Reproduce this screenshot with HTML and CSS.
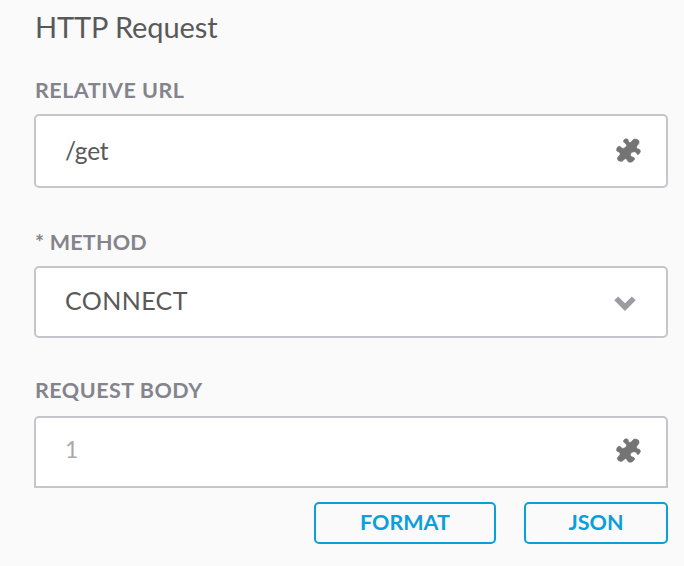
FILE: index.html
```
<!DOCTYPE html>
<html lang="en">
<head>
<meta charset="utf-8">
<title>HTTP Request</title>
<link rel="stylesheet" href="styles.css">
</head>
<body>
<svg class="defs" aria-hidden="true">
  <symbol id="puzzle" viewBox="-1 -1 75 75"><path d="M22 6Q26-1 33 2Q37 5 36 9Q37 13 42 12Q47 11 49 6Q53 0 61 3Q69 5 68 12Q68 17 64 20Q59 24 61 29Q63 32 67 32Q73 34 72 40L68 47Q66 49 63 48Q61 40 54 40Q45 40 42 47Q41 52 46 55Q56 57 55 63Q49 72 41 72Q35 71 34 68Q32 60 27 61Q23 62 22 65Q18 70 12 69Q4 68 3 61Q3 56 8 53Q13 49 11 44Q9 40 5 40Q-1 38 1 32Q3 25 8 24Q11 23 13 26Q16 31 22 30Q30 29 31 21Q30 16 25 14Q20 11 22 6Z"/></symbol>
</svg>
<main class="panel">
  <h1 class="title"><span>HTTP Request</span></h1>
  <section class="field">
    <div class="label url-label"><span>RELATIVE URL</span></div>
    <div class="control url"><span class="value">/get</span><svg class="puzzle"><use href="#puzzle"/></svg></div>
  </section>
  <section class="field">
    <div class="label method"><span>* METHOD</span></div>
    <div class="control select"><span class="value">CONNECT</span><svg class="chevron" viewBox="0 0 22 16"><path d="M2.2 2.4 11 11.2 19.8 2.4"/></svg></div>
  </section>
  <section class="field">
    <div class="label body-label"><span>REQUEST BODY</span></div>
    <div class="control editor"><span class="line">1</span><svg class="puzzle"><use href="#puzzle"/></svg></div>
  </section>
  <div class="actions">
    <button class="button format">FORMAT</button>
    <button class="button json">JSON</button>
  </div>
</main>
</body>
</html>
```
FILE: styles.css
```
* { box-sizing: border-box; }
body {
  margin: 0;
  background: #fafafa;
  color: #59595a;
  font-family: Lato, sans-serif;
}
.defs { display: none; }
.panel { padding: 9px 16px 0 34px; }
.title {
  margin: 0 0 33px;
  padding-left: 1px;
  font-size: 29px;
  font-weight: 400;
  line-height: 36px;
  letter-spacing: -0.1px;
}
.label {
  height: 24px;
  padding-left: 1px;
  color: #84848c;
  font-size: 21.5px;
  font-weight: 700;
  line-height: 24px;
  letter-spacing: 0.5px;
}
.url-label { margin-bottom: 12px; }
.method { margin-bottom: 12px; letter-spacing: 0.2px; }
.body-label { margin-bottom: 14px; }
.control {
  display: flex;
  align-items: center;
  justify-content: space-between;
  border: 2px solid #c5c5cb;
  border-radius: 5px;
  background: #fff;
  padding: 0 25px 0 29px;
  font-size: 25px;
  line-height: 30px;
}
.url { height: 74px; margin-bottom: 42px; padding-bottom: 2px; font-size: 24.5px; }
.url .value { padding-top: 2px; letter-spacing: -0.2px; }
.select { height: 72px; margin-bottom: 40px; padding-right: 30px; letter-spacing: 0.4px; }
.editor { height: 72px; padding-bottom: 4px; border-radius: 5px 5px 0 0; }
.select .value { position: relative; top: -2px; }
.line { padding-bottom: 2px; color: #a9a9a9; font-size: 23px; }
.puzzle { width: 25px; height: 25px; fill: #747474; stroke: #747474; stroke-width: 2; }
.chevron { width: 22px; height: 16px; margin-top: 4px; fill: none; stroke: #9c9ca2; stroke-width: 5.5; }
.actions {
  display: flex;
  justify-content: flex-end;
  gap: 28px;
  margin-top: 14px;
}
.button {
  height: 42px;
  padding: 0 0 2px;
  border: 2px solid #0a9fdb;
  border-radius: 5px;
  background: transparent;
  color: #0a9fdb;
  font: 700 21.5px/26px Lato, sans-serif;
}
.format { width: 182px; }
.json { width: 144px; }
```
